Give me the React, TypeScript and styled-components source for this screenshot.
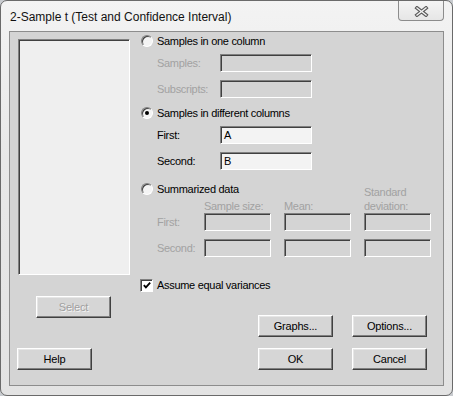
import React from 'react';
import styled, { createGlobalStyle } from 'styled-components';

const GlobalStyle = createGlobalStyle`
  html, body {
    margin: 0;
    padding: 0;
    background: #c8cbcf;
  }
  body {
    font-family: "Liberation Sans", Arial, sans-serif;
    font-size: 11px;
    color: #000;
  }
`;

const summaryRows = [
  { label: 'First:', row: 3 },
  { label: 'Second:', row: 4 },
];

const App = () => {
  return (
    <>
      <GlobalStyle />
      <Window>
        <TitleBar>
          <Title>2-Sample t (Test and Confidence Interval)</Title>
          <CloseBtn>
            <svg width="15" height="11" viewBox="0 0 15 11">
              <path d="M3 2 L12 9 M12 2 L3 9" stroke="#5a5a5a" strokeWidth="3.6" strokeLinecap="square" fill="none" />
              <path d="M3 2 L12 9 M12 2 L3 9" stroke="#f4f4f4" strokeWidth="1.4" strokeLinecap="square" fill="none" />
            </svg>
          </CloseBtn>
        </TitleBar>
        <Client>
          <Main>
            <LeftCol>
              <ListBox />
            </LeftCol>
            <RightCol>
              <RadioRow>
                <Radio />
                <Label>Samples in one column</Label>
              </RadioRow>
              <FieldRow $top={6}>
                <FieldLabel $disabled>Samples:</FieldLabel>
                <TextBox $disabled />
              </FieldRow>
              <FieldRow $top={8}>
                <FieldLabel $disabled>Subscripts:</FieldLabel>
                <TextBox $disabled />
              </FieldRow>
              <RadioRow $top={8}>
                <Radio $checked />
                <Label>Samples in different columns</Label>
              </RadioRow>
              <FieldRow $top={6}>
                <FieldLabel>First:</FieldLabel>
                <TextBox>A</TextBox>
              </FieldRow>
              <FieldRow $top={8}>
                <FieldLabel>Second:</FieldLabel>
                <TextBox>B</TextBox>
              </FieldRow>
              <SummaryGrid>
                <SummaryRadio>
                  <Radio />
                  <Label>Summarized data</Label>
                </SummaryRadio>
                <ColHead $col={2}>Sample size:</ColHead>
                <ColHead $col={3}>Mean:</ColHead>
                <StdHead>
                  Standard
                  <br />
                  deviation:
                </StdHead>
                {summaryRows.map((r) => (
                  <React.Fragment key={r.label}>
                    <RowLabel $row={r.row}>{r.label}</RowLabel>
                    <SmallBox $row={r.row} $col={2} />
                    <SmallBox $row={r.row} $col={3} />
                    <SmallBox $row={r.row} $col={4} />
                  </React.Fragment>
                ))}
              </SummaryGrid>
              <CheckRow>
                <CheckBox>
                  <svg width="11" height="11" viewBox="0 0 11 11">
                    <path d="M2 5 L4.3 7.6 L9 2.4" stroke="#000" strokeWidth="2" fill="none" />
                  </svg>
                </CheckBox>
                <Label>Assume equal variances</Label>
              </CheckRow>
            </RightCol>
          </Main>
          <FooterTop>
            <Button disabled>Select</Button>
            <BtnGroup>
              <Button>Graphs...</Button>
              <Button>Options...</Button>
            </BtnGroup>
          </FooterTop>
          <FooterBottom>
            <Button>Help</Button>
            <BtnGroup>
              <Button>OK</Button>
              <Button>Cancel</Button>
            </BtnGroup>
          </FooterBottom>
        </Client>
      </Window>
    </>
  );
};

export default App;

const Window = styled.div`
  box-sizing: border-box;
  width: 453px;
  height: 396px;
  display: flex;
  flex-direction: column;
  border: 1px solid #6a6a6a;
  border-radius: 7px;
  background: linear-gradient(180deg, #f3f3f3 0%, #e8e8e8 40%, #e3e3e3 100%);
  padding: 0 8px 9px 8px;
`;

const TitleBar = styled.div`
  height: 30px;
  display: flex;
  justify-content: space-between;
  align-items: center;
  padding-left: 1px;
`;

const Title = styled.span`
  font-family: "Liberation Sans", Arial, sans-serif;
  font-size: 12px;
  color: #111;
  padding-top: 2px;
`;

const CloseBtn = styled.div`
  align-self: flex-start;
  box-sizing: border-box;
  width: 46px;
  height: 20px;
  display: flex;
  align-items: center;
  justify-content: center;
  border: 1px solid #8c8c8c;
  border-top: none;
  border-radius: 0 0 4px 4px;
  background: linear-gradient(180deg, #f4f4f4 0%, #e6e6e6 100%);
  padding-top: 1px;
`;

const Client = styled.div`
  flex: 1;
  display: flex;
  flex-direction: column;
  border: 1px solid #8d8d8d;
  background: #d4d4d4;
  padding-top: 2px;
`;

const Main = styled.div`
  display: flex;
  align-items: flex-start;
`;

const LeftCol = styled.div`
  margin: 5px 0 0 8px;
`;

const ListBox = styled.div`
  box-sizing: border-box;
  width: 112px;
  height: 236px;
  border: 1px solid;
  border-color: #808080 #ffffff #ffffff #808080;
  box-shadow: inset 1px 1px #404040;
  background: #efefef;
`;

const RightCol = styled.div`
  display: flex;
  flex-direction: column;
  margin-left: 11px;
`;

const RadioRow = styled.div<{ $top?: number }>`
  display: flex;
  align-items: center;
  height: 14px;
  margin-top: ${(p) => p.$top ?? 0}px;
`;

const Radio = styled.span<{ $checked?: boolean }>`
  position: relative;
  box-sizing: border-box;
  width: 12px;
  height: 12px;
  margin-right: 4px;
  border-radius: 50%;
  border: 1px solid;
  border-color: #808080 #ffffff #ffffff #808080;
  box-shadow: inset 1px 1px #404040;
  background: #f4f4f4;
  &::after {
    content: '';
    display: ${(p) => (p.$checked ? 'block' : 'none')};
    position: absolute;
    left: 3px;
    top: 3px;
    width: 4px;
    height: 4px;
    border-radius: 50%;
    background: #000;
  }
`;

const Label = styled.span<{ $disabled?: boolean }>`
  white-space: nowrap;
  letter-spacing: -0.3px;
  color: ${(p) => (p.$disabled ? '#a2a2a2' : '#000')};
`;

const FieldRow = styled.div<{ $top?: number }>`
  display: flex;
  align-items: center;
  height: 18px;
  padding-left: 16px;
  margin-top: ${(p) => p.$top ?? 0}px;
`;

const FieldLabel = styled(Label)`
  width: 63px;
`;

const TextBox = styled.div<{ $disabled?: boolean }>`
  box-sizing: border-box;
  width: 92px;
  height: 18px;
  line-height: 16px;
  padding-left: 3px;
  border: 1px solid;
  border-color: #808080 #ffffff #ffffff #808080;
  box-shadow: inset 1px 1px #404040;
  background: ${(p) => (p.$disabled ? '#d4d4d4' : '#f3f3f3')};
`;

const SummaryGrid = styled.div`
  display: grid;
  grid-template-columns: 50px 67px 67px 67px;
  grid-template-rows: 14px 17px 26px 18px;
  column-gap: 13px;
  margin-top: 12px;
  color: #a2a2a2;
  letter-spacing: -0.3px;
`;

const SummaryRadio = styled.div`
  grid-column: 1 / 4;
  grid-row: 1;
  display: flex;
  align-items: center;
  color: #000;
`;

const ColHead = styled.span<{ $col: number }>`
  grid-column: ${(p) => p.$col};
  grid-row: 2;
  align-self: end;
  line-height: 14px;
  white-space: nowrap;
`;

const StdHead = styled.span`
  grid-column: 4;
  grid-row: 1 / 3;
  align-self: end;
  line-height: 14px;
`;

const RowLabel = styled.span<{ $row: number }>`
  grid-column: 1;
  grid-row: ${(p) => p.$row};
  align-self: start;
  padding-left: 16px;
  line-height: 18px;
  height: 18px;
  white-space: nowrap;
`;

const SmallBox = styled(TextBox).attrs({ $disabled: true })<{ $row: number; $col: number }>`
  grid-column: ${(p) => p.$col};
  grid-row: ${(p) => p.$row};
  align-self: start;
  width: 67px;
`;

const CheckRow = styled.div`
  display: flex;
  align-items: center;
  height: 14px;
  margin: 21px 0 0 -1px;
`;

const CheckBox = styled.span`
  box-sizing: border-box;
  width: 13px;
  height: 13px;
  margin-right: 4px;
  display: flex;
  align-items: center;
  justify-content: center;
  border: 1px solid;
  border-color: #808080 #ffffff #ffffff #808080;
  box-shadow: inset 1px 1px #404040;
  background: #fff;
  padding: 1px 0 0 1px;
`;

const FooterTop = styled.div`
  display: flex;
  justify-content: space-between;
  height: 41px;
  margin-top: 4px;
  padding: 0 16px 0 26px;
`;

const FooterBottom = styled.div`
  display: flex;
  justify-content: space-between;
  margin-top: 11px;
  padding: 0 16px 0 7px;
`;

const BtnGroup = styled.div`
  display: flex;
  gap: 19px;
  align-self: flex-end;
`;

const Button = styled.button`
  box-sizing: border-box;
  width: 75px;
  height: 22px;
  padding: 0;
  font-family: "Liberation Sans", Arial, sans-serif;
  font-size: 11px;
  letter-spacing: -0.2px;
  color: #000;
  background: #d6d6d6;
  border: 1px solid;
  border-color: #ffffff #404040 #404040 #ffffff;
  box-shadow: inset -1px -1px #808080, inset 1px 1px #e6e6e6;
  align-self: flex-start;
  &:disabled {
    color: #a0a0a0;
    text-shadow: 1px 1px #f4f4f4;
  }
`;
